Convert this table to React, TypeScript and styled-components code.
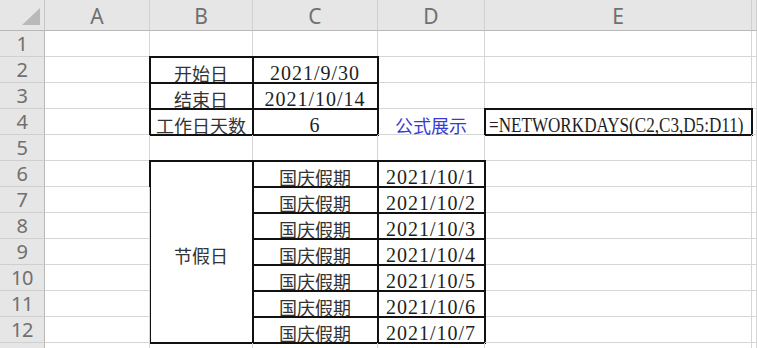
import React from 'react';
import styled, { createGlobalStyle } from 'styled-components';

const GlobalStyle = createGlobalStyle`
  html, body {
    margin: 0;
    padding: 0;
    background: #ffffff;
    overflow: hidden;
  }
`;

// column widths: row header, A..E, then a sliver of F
const COLUMNS = ['A', 'B', 'C', 'D', 'E', 'F'];
const WIDTHS = [45, 105, 103, 125, 107, 267, 5];

type CellData = {
  text?: string;
  box?: boolean;
  latin?: boolean;
  left?: boolean;
  blue?: boolean;
  span?: number;
};

type RowData = Record<string, CellData>;

const holiday = (day: number): RowData => ({
  C: { text: '国庆假期', box: true },
  D: { text: `2021/10/${day}`, box: true, latin: true },
});

const ROWS: RowData[] = [
  {},
  {
    B: { text: '开始日', box: true },
    C: { text: '2021/9/30', box: true, latin: true },
  },
  {
    B: { text: '结束日', box: true },
    C: { text: '2021/10/14', box: true, latin: true },
  },
  {
    B: { text: '工作日天数', box: true },
    C: { text: '6', box: true, latin: true },
    D: { text: '公式展示', blue: true },
    E: { text: '=NETWORKDAYS(C2,C3,D5:D11)', box: true, latin: true, left: true },
  },
  {},
  { B: { text: '节假日', box: true, span: 7 }, ...holiday(1) },
  holiday(2),
  holiday(3),
  holiday(4),
  holiday(5),
  holiday(6),
  holiday(7),
  {},
];

const Sheet = styled.div`
  display: grid;
  grid-template-columns: ${WIDTHS.map((w) => `${w}px`).join(' ')};
  grid-template-rows: 31px;
  grid-auto-rows: 26px;
  width: max-content;
`;

const Corner = styled.div`
  background: #e6e6e6;
  border-right: 1px solid #c6c6c6;
  border-bottom: 1px solid #b8b8b8;
  display: flex;
  align-items: flex-end;
  justify-content: flex-end;
  padding: 0 4px 5px 0;
  box-sizing: border-box;
`;

const ColHead = styled.div`
  background: #e6e6e6;
  border-right: 1px solid #d0d0d0;
  border-bottom: 1px solid #b8b8b8;
  box-sizing: border-box;
  display: flex;
  align-items: center;
  justify-content: center;
  font-family: 'Noto Sans', 'Open Sans', sans-serif;
  font-size: 21px;
  color: #707070;
  padding-top: 1px;
`;

const RowHead = styled.div`
  background: #e6e6e6;
  border-right: 1px solid #b8b8b8;
  border-bottom: 1px solid #cfcfcf;
  box-sizing: border-box;
  display: flex;
  align-items: center;
  justify-content: center;
  font-family: 'Noto Sans', 'Open Sans', sans-serif;
  font-size: 20px;
  letter-spacing: -0.5px;
  color: #707070;
  line-height: 1;
  padding-top: 1px;
`;

const Cell = styled.div<{ $box?: boolean; $left?: boolean; $blue?: boolean; $span?: number }>`
  box-sizing: border-box;
  border-right: 1px solid #d6d6d6;
  border-bottom: 1px solid #d6d6d6;
  display: flex;
  align-items: center;
  justify-content: ${(p) => (p.$left ? 'flex-start' : 'center')};
  padding: 7px 0 0 ${(p) => (p.$left ? '4px' : '0')};
  grid-row: ${(p) => (p.$span ? `span ${p.$span}` : 'auto')};
  color: ${(p) => (p.$blue ? '#3a3ad2' : '#333333')};
  font-family: 'Noto Sans CJK SC', 'Noto Sans', sans-serif;
  font-size: 18px;
  white-space: nowrap;
  overflow: visible;
  outline: ${(p) => (p.$box ? '2px solid #111' : 'none')};
  outline-offset: -1px;
`;

const Latin = styled.span<{ $narrow?: boolean }>`
  display: inline-block;
  font-family: 'Liberation Serif', 'DejaVu Serif', serif;
  font-size: 20px;
  line-height: 1;
  color: #1e1e1e;
  letter-spacing: ${(p) => (p.$narrow ? '0' : '1px')};
  transform: ${(p) => (p.$narrow ? 'scaleX(0.855)' : 'none')};
  transform-origin: left center;
`;

const SelectAll = () => (
  <svg width="18" height="17" viewBox="0 0 18 17">
    <polygon points="18,0 18,17 0,17" fill="#b9b9b9" />
  </svg>
);

export default function App() {
  return (
    <>
      <GlobalStyle />
      <Sheet>
        <Corner>
          <SelectAll />
        </Corner>
        {COLUMNS.map((c) => (
          <ColHead key={c}>{c === 'F' ? '' : c}</ColHead>
        ))}
        {ROWS.map((row, i) => (
          <React.Fragment key={i}>
            <RowHead>{i < 12 ? i + 1 : ''}</RowHead>
            {COLUMNS.map((c) => {
              // B7:B12 sit under the merged 节假日 cell
              if (c === 'B' && i >= 6 && i <= 11) return null;
              const cell = row[c] ?? {};
              return (
                <Cell
                  key={c}
                  $box={cell.box}
                  $left={cell.left}
                  $blue={cell.blue}
                  $span={cell.span}
                >
                  {cell.text &&
                    (cell.latin ? <Latin $narrow={cell.left}>{cell.text}</Latin> : cell.text)}
                </Cell>
              );
            })}
          </React.Fragment>
        ))}
      </Sheet>
    </>
  );
}
